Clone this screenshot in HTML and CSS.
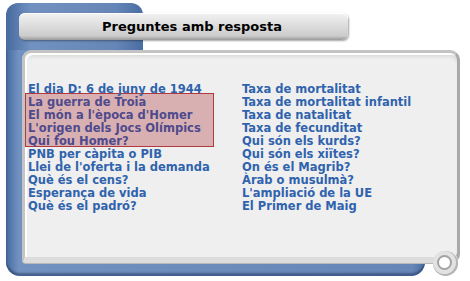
FILE: index.html
```html
<!DOCTYPE html>
<html lang="ca">
<head>
    <meta charset="UTF-8">
    <title>Preguntes amb resposta</title>
    <link rel="stylesheet" href="styles.css">
</head>
<body>
    <div class="frame">
        <div class="tab">
            <div class="title">Preguntes amb resposta</div>
        </div>
        <div class="body">
            <div class="panel">
                <div class="columns">
                    <ul class="list">
                        <li><a href="#">El dia D: 6 de juny de 1944</a></li>
                        <li class="group">
                            <ul class="list">
                                <li><a href="#" class="visited">La guerra de Troia</a></li>
                                <li><a href="#" class="visited">El món a l'època d'Homer</a></li>
                                <li><a href="#" class="visited">L'origen dels Jocs Olímpics</a></li>
                                <li><a href="#" class="visited">Qui fou Homer?</a></li>
                            </ul>
                        </li>
                        <li><a href="#">PNB per càpita o PIB</a></li>
                        <li><a href="#">Llei de l'oferta i la demanda</a></li>
                        <li><a href="#">Què és el cens?</a></li>
                        <li><a href="#">Esperança de vida</a></li>
                        <li><a href="#">Què és el padró?</a></li>
                    </ul>
                    <ul class="list">
                        <li><a href="#">Taxa de mortalitat</a></li>
                        <li><a href="#">Taxa de mortalitat infantil</a></li>
                        <li><a href="#">Taxa de natalitat</a></li>
                        <li><a href="#">Taxa de fecunditat</a></li>
                        <li><a href="#">Qui són els kurds?</a></li>
                        <li><a href="#">Qui són els xiïtes?</a></li>
                        <li><a href="#">On és el Magrib?</a></li>
                        <li><a href="#">Àrab o musulmà?</a></li>
                        <li><a href="#">L'ampliació de la UE</a></li>
                        <li><a href="#">El Primer de Maig</a></li>
                    </ul>
                </div>
                <span class="knob"></span>
            </div>
        </div>
    </div>
</body>
</html>
```

FILE: styles.css
```css
body {
    margin: 0;
    background-color: #ffffff;
    font-family: 'DejaVu Sans', Verdana, sans-serif;
}

.frame {
    margin: 3px 0 0 6px;
    width: 456px;
}

.tab {
    width: 137px;
    height: 47px;
    box-sizing: border-box;
    padding: 10px 0 0 13px;
    background: linear-gradient(to right, #46699e, #7191c0 18%, #6686b7 80%, #4a6da2);
    border-radius: 12px 12px 0 0;
}

.title {
    width: 329px;
    height: 27px;
    box-sizing: border-box;
    padding: 6px 0 0 17px;
    text-align: center;
    font-size: 13px;
    font-weight: bold;
    color: #000000;
    background: linear-gradient(#f2f2f2, #dedede 45%, #cbcbcb 85%, #9a9a9a);
    border-radius: 6px;
    box-shadow: 1px 1px 2px rgba(0, 0, 0, 0.35), inset 0 1px 0 #ffffff;
}

.body {
    width: 419px;
    height: 226px;
    box-sizing: border-box;
    padding: 0 0 0 16px;
    background: linear-gradient(to right, #46699e, #7191c0 3%, #6686b7 97%, #4a6da2);
    border-radius: 0 0 14px 14px;
    box-shadow: inset 0 -3px 2px rgba(20, 40, 80, 0.45);
}

.panel {
    position: relative;
    width: 438px;
    height: 213px;
    box-sizing: border-box;
    padding: 28px 0 0 3px;
    background-color: #efefef;
    border: 3px solid #c4c4c4;
    border-right-color: #aaaaaa;
    border-bottom: 6px solid #dcdcdc;
    border-radius: 9px 10px 10px 4px;
    box-shadow: inset 2px 2px 0 #ffffff, inset 0 5px 4px -2px rgba(0, 0, 0, 0.12), 0 1px 0 #b8b8b8;
}

.columns {
    display: grid;
    grid-template-columns: 214px 1fr;
}

.list {
    list-style: none;
    margin: 0;
    padding: 0;
}

.list li {
    line-height: 13px;
    height: 13px;
}

.list a {
    font-size: 11.5px;
    font-weight: bold;
    color: #2f63ad;
    text-decoration: none;
    white-space: nowrap;
}

.list .group {
    height: auto;
    margin-left: -3px;
    width: 185px;
    padding-left: 2px;
    background-color: #d9b0b2;
    border: 1px solid #b03a3e;
    margin-top: -1px;
    margin-bottom: -1px;
}

.list a.visited {
    color: #4e4a8c;
}

.knob {
    position: absolute;
    right: 5px;
    bottom: -13px;
    width: 11px;
    height: 11px;
    border-radius: 50%;
    background-color: #ffffff;
    border: 2px solid #a4a4a4;
    box-shadow: 0 0 0 4px #e2e2e2, 1px 1px 0 5px #b4b4b4;
}
```
